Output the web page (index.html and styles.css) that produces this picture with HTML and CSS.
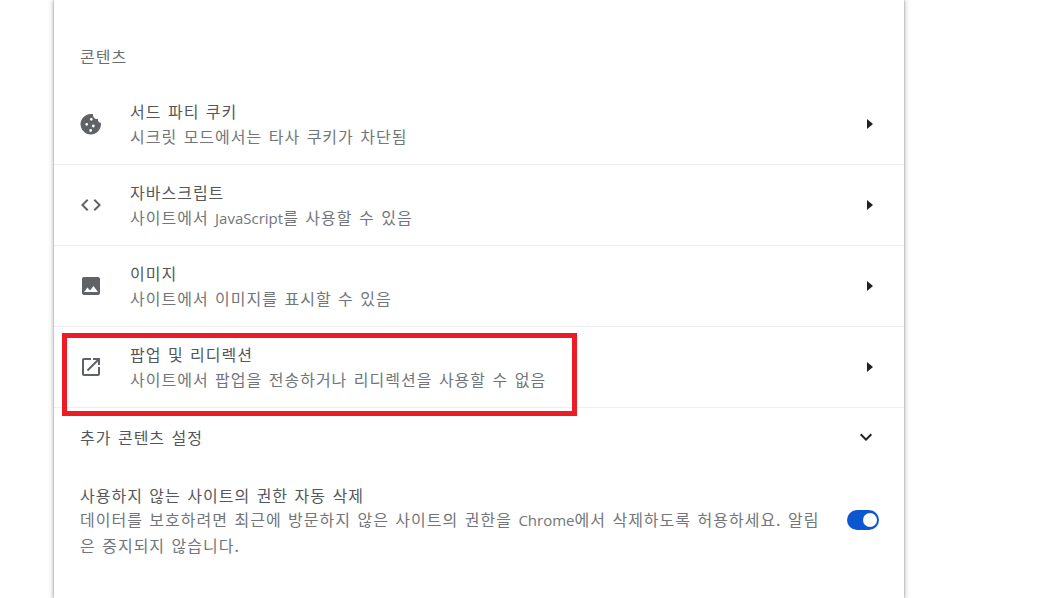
FILE: index.html
```html
<!DOCTYPE html>
<html lang="ko">
<head>
<meta charset="utf-8">
<title>콘텐츠</title>
<link rel="stylesheet" href="styles.css">
</head>
<body>
<main class="card">
  <h2 class="heading">콘텐츠</h2>
  <div class="row">
    <svg class="icon" viewBox="0 0 24 24"><path fill-rule="evenodd" d="M21.950 10.990c-1.790-.03-3.700-1.950-2.680-4.220-2.980 1-5.770-1.590-5.190-4.560C6.950.71 1.500 6.580 1.500 12c0 5.520 4.700 10.500 10.500 10.500 5.890 0 10.540-5.580 9.950-11.510zM12.300 5.900a1.400 1.400 0 1 0 0 2.800 1.400 1.400 0 0 0 0-2.800zM7.700 10.900a1.400 1.400 0 1 0 0 2.800 1.400 1.400 0 0 0 0-2.800zM14.300 12.600a1.400 1.400 0 1 0 0 2.800 1.400 1.400 0 0 0 0-2.800zM11.700 17.100a1.400 1.400 0 1 0 0 2.800 1.400 1.400 0 0 0 0-2.800z"/></svg>
    <div class="text"><div class="title">서드 파티 쿠키</div><div class="sub">시크릿 모드에서는 타사 쿠키가 차단됨</div></div>
    <svg class="arrow" viewBox="0 0 8 12"><path d="M1 1l6 5-6 5z"/></svg>
  </div>
  <div class="row divided">
    <svg class="icon" viewBox="0 0 24 24"><path d="M9.400 16.600L4.800 12l4.600-4.600L8 6l-6 6 6 6 1.400-1.400zm5.200 0l4.600-4.600-4.600-4.600L16 6l6 6-6 6-1.400-1.400z"/></svg>
    <div class="text"><div class="title">자바스크립트</div><div class="sub">사이트에서 <span class="latin">JavaScript</span>를 사용할 수 있음</div></div>
    <svg class="arrow" viewBox="0 0 8 12"><path d="M1 1l6 5-6 5z"/></svg>
  </div>
  <div class="row divided">
    <svg class="icon" viewBox="0 0 24 24"><path d="M21 19V5c0-1.100-.9-2-2-2H5c-1.100 0-2 .9-2 2v14c0 1.100.9 2 2 2h14c1.100 0 2-.9 2-2zM8.500 13.500l2.500 3.010L14.500 12l4.500 6H5l3.500-4.500z"/></svg>
    <div class="text"><div class="title">이미지</div><div class="sub">사이트에서 이미지를 표시할 수 있음</div></div>
    <svg class="arrow" viewBox="0 0 8 12"><path d="M1 1l6 5-6 5z"/></svg>
  </div>
  <div class="row divided">
    <svg class="icon" viewBox="0 0 24 24"><path d="M19 19H5V5h7V3H5c-1.110 0-2 .9-2 2v14c0 1.100.89 2 2 2h14c1.100 0 2-.9 2-2v-7h-2v7zM14 3v2h3.590l-9.830 9.830 1.410 1.410L19 6.410V10h2V3h-7z"/></svg>
    <div class="text"><div class="title">팝업 및 리디렉션</div><div class="sub">사이트에서 팝업을 전송하거나 리디렉션을 사용할 수 없음</div></div>
    <svg class="arrow" viewBox="0 0 8 12"><path d="M1 1l6 5-6 5z"/></svg>
    <div class="highlight"></div>
  </div>
  <div class="more divided">
    <span class="more-label">추가 콘텐츠 설정</span>
    <svg class="chevron" viewBox="0 0 24 24"><path d="M7.410 8.590L12 13.170l4.590-4.580L18 10l-6 6-6-6z"/></svg>
  </div>
  <div class="auto">
    <div class="auto-text">
      <div class="title">사용하지 않는 사이트의 권한 자동 삭제</div>
      <div class="sub">데이터를 보호하려면 최근에 방문하지 않은 사이트의 권한을 <span class="latin">Chrome</span>에서 삭제하도록 허용하세요. 알림<br>은 중지되지 않습니다.</div>
    </div>
    <div class="toggle"><span class="knob"></span></div>
  </div>
</main>
</body>
</html>
```
FILE: styles.css
```css
* { box-sizing: border-box; }
html, body { margin: 0; height: 598px; overflow: hidden; background: #fff; }
body {
  font-family: "Noto Sans CJK KR", "Noto Sans", sans-serif;
  font-size: 16px;
  letter-spacing: 1px;
  word-spacing: 1px;
  color: #202124;
}
.card {
  width: 850px;
  height: 598px;
  margin-left: 54px;
  background: #fff;
  box-shadow: 0 0 2px rgba(60,64,67,.4), 0 1px 5px 1px rgba(60,64,67,.3);
}
.heading {
  margin: 0;
  padding: 46px 26px 0;
  height: 83px;
  font-size: 16px;
  line-height: 21px;
  font-weight: 400;
  color: #6a6e72;
}
.row {
  position: relative;
  display: flex;
  align-items: center;
  height: 81px;
  padding: 0 26px;
}
.divided { border-top: 1px solid #eceef0; }
.icon { width: 24px; height: 24px; fill: #5f6368; margin: 0 27px 0 -1px; flex: none; }
.text { flex: 1; display: flex; flex-direction: column; gap: 1px; }
.title { line-height: 24px; color: #54575a; }
.sub { line-height: 25px; color: #72767a; }
.latin { font-family: "Open Sans", sans-serif; font-size: 15px; letter-spacing: 0; }
.arrow { width: 8px; height: 12px; fill: #202124; margin-right: 4px; flex: none; }
.highlight {
  position: absolute;
  left: 8px;
  top: 6px;
  width: 515px;
  height: 83px;
  border: 5px solid #ed1c24;
}
.more {
  display: flex;
  align-items: center;
  justify-content: space-between;
  height: 61px;
  padding: 0 26px 2px;
}
.more-label { color: #54575a; }
.chevron { width: 24px; height: 24px; fill: #202124; margin-right: 0; }
.auto {
  display: flex;
  align-items: center;
  padding: 15px 25px 0 26px;
}
.auto-text { width: 745px; margin-right: 22px; }
.toggle {
  width: 32px;
  height: 20px;
  margin-bottom: 2px;
  border-radius: 10px;
  background: #0b57d0;
  display: flex;
  align-items: center;
  justify-content: flex-end;
  padding-right: 2px;
}
.knob { width: 14px; height: 14px; border-radius: 50%; background: #fff; }
```
